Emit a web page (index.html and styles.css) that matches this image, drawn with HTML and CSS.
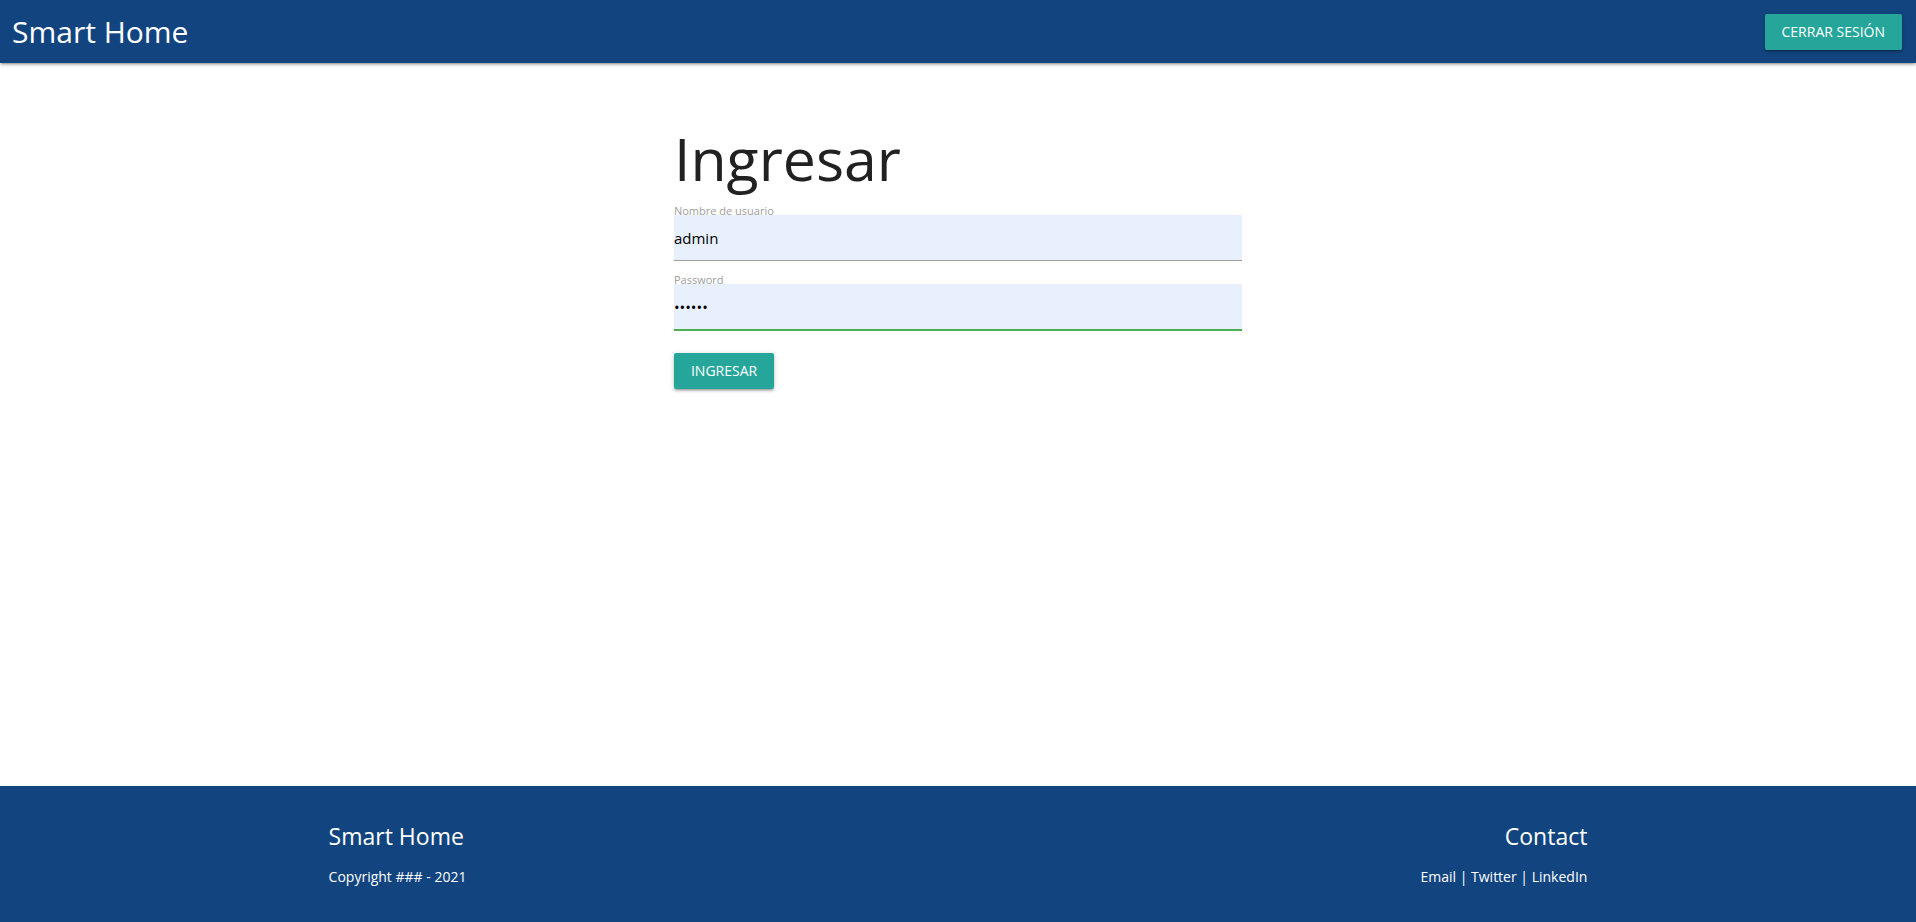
FILE: index.html
```html
<!DOCTYPE html>
<html lang="es">
<head>
<meta charset="utf-8">
<meta name="viewport" content="width=device-width, initial-scale=1">
<title>Smart Home</title>
<link rel="stylesheet" href="styles.css">
</head>
<body>
<header class="navbar">
  <a class="brand" href="#">Smart Home</a>
  <button class="btn" type="button">Cerrar sesión</button>
</header>
<main class="content">
  <form class="login">
    <h1 class="title">Ingresar</h1>
    <div class="field">
      <label class="label" for="user">Nombre de usuario</label>
      <input class="input" id="user" type="text" value="admin">
    </div>
    <div class="field">
      <label class="label" for="pass">Password</label>
      <input class="input input-valid" id="pass" type="password" value="secret">
    </div>
    <button class="btn" type="button">Ingresar</button>
  </form>
</main>
<footer class="footer">
  <div class="footer-inner">
    <section>
      <h5 class="footer-title">Smart Home</h5>
      <p class="footer-text">Copyright ### - 2021</p>
    </section>
    <section class="footer-right">
      <h5 class="footer-title">Contact</h5>
      <p class="footer-text"><a class="link" href="#">Email</a> | <a class="link" href="#">Twitter</a> | <a class="link" href="#">LinkedIn</a></p>
    </section>
  </div>
</footer>
</body>
</html>
```

FILE: styles.css
```css
* { box-sizing: border-box; }
body {
  margin: 0;
  min-height: 100vh;
  display: flex;
  flex-direction: column;
  background: #fff;
  color: #212121;
  font: 15px/22px "Segoe UI", "Open Sans", "Noto Sans", sans-serif;
}
.navbar {
  display: flex;
  align-items: center;
  justify-content: space-between;
  padding: 14px 14px 13px 12px;
  background: #12457f;
  box-shadow: 0 2px 2px 0 rgba(0,0,0,.14), 0 3px 1px -2px rgba(0,0,0,.12), 0 1px 5px 0 rgba(0,0,0,.2);
}
.brand {
  color: #fff;
  font-size: 30px;
  line-height: 36px;
  text-decoration: none;
}
.btn {
  height: 36px;
  padding: 0 17px;
  border: 0;
  border-radius: 2px;
  background: #26a69a;
  color: #fff;
  font-family: inherit;
  font-size: 14px;
  line-height: 36px;
  text-transform: uppercase;
  box-shadow: 0 2px 2px 0 rgba(0,0,0,.14), 0 3px 1px -2px rgba(0,0,0,.12), 0 1px 5px 0 rgba(0,0,0,.2);
}
.content { flex: 1; }
.login {
  width: 29.65%;
  margin: 0 auto;
  padding-top: 60px;
}
.title {
  margin: 0 0 10px;
  font-size: 59px;
  font-weight: 400;
  line-height: 70px;
}
.field {
  display: flex;
  flex-direction: column;
  margin-bottom: 13px;
}
.label {
  margin-bottom: -4px;
  color: #9e9e9e;
  font-size: 11px;
  line-height: 16px;
}
.input {
  width: 100%;
  height: 46px;
  padding: 0;
  border: 0;
  border-bottom: 1px solid #9e9e9e;
  border-radius: 0;
  background: #e8f0fe;
  color: #000;
  font-family: inherit;
  font-size: 15px;
  outline: 0;
}
.input-valid {
  height: 47px;
  margin-bottom: 9px;
  border-bottom: 2px solid #4caf50;
}
.field + .field { margin-top: -2px; }
.footer {
  padding: 36px 0 34px;
  background: #12457f;
  color: #fff;
}
.footer-inner {
  display: flex;
  justify-content: space-between;
  width: 65.7%;
  margin: 0 auto;
}
.footer-right { text-align: right; }
.footer-title {
  margin: 0 0 15px;
  font-size: 23px;
  font-weight: 400;
  line-height: 29px;
}
.footer-text { margin: 0; font-size: 14px; }
.link { color: inherit; text-decoration: none; }
```
